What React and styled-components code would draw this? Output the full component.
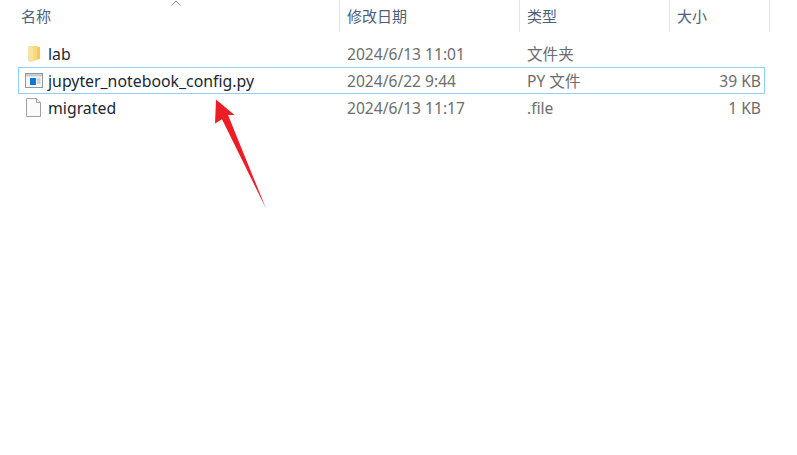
import React from "react";
import styled, { createGlobalStyle } from "styled-components";

const GlobalStyle = createGlobalStyle`
  html, body {
    margin: 0;
    padding: 0;
    background: #ffffff;
  }
  body {
    font-family: "Noto Sans", "Noto Sans CJK SC", sans-serif;
  }
`;

const Window = styled.div`
  position: relative;
  width: 797px;
  height: 455px;
  overflow: hidden;
  background: #ffffff;
`;

const Header = styled.div`
  display: grid;
  grid-template-columns: 340px 180px 150px 100px;
  height: 32px;
  margin-bottom: 8px;
`;

const HeaderCell = styled.div`
  display: flex;
  align-items: center;
  padding-left: ${(p) => p.$pad || 7}px;
  padding-bottom: 2px;
  border-right: 1px solid #e5e5e5;
  color: #4c607a;
  font-family: "Noto Sans CJK SC", sans-serif;
  font-size: 15px;
`;

const SortMark = styled.svg`
  position: absolute;
  left: 171px;
  top: 0;
`;

const FileList = styled.div`
  display: flex;
  flex-direction: column;
  margin-left: 18px;
  width: 747px;
`;

const Row = styled.div`
  display: grid;
  grid-template-columns: 321px 180px 150px 96px;
  align-items: center;
  height: 27px;
  box-sizing: border-box;
  border: 1px solid ${(p) => (p.$selected ? "#8fcfff" : "transparent")};
`;

const NameCell = styled.div`
  display: flex;
  align-items: center;
  gap: 5px;
  padding-left: 5px;
  color: #1c2733;
  font-size: 15.85px;
  white-space: nowrap;
`;

const IconSlot = styled.span`
  display: flex;
  width: 19px;
  height: 19px;
  justify-content: center;
  align-items: center;
`;

const InfoCell = styled.div`
  padding-left: 7px;
  color: #6d6d6d;
  font-size: 15.6px;
  white-space: nowrap;
`;

const SizeCell = styled(InfoCell)`
  padding-left: 0;
  padding-right: 5px;
  text-align: right;
`;

const Arrow = styled.svg`
  position: absolute;
  left: 210px;
  top: 95px;
`;

const FolderIcon = () => (
  <svg width="14" height="18" viewBox="0 0 14 18">
    <path d="M1 1h9l3 2v11l-10 3-2-2z" fill="#fbd878" />
    <path d="M1 1h4l1 3v12l-3 1-2-2z" fill="#f6e3a8" />
    <path d="M10 2h3v12h-3z" fill="#f3c95f" />
  </svg>
);

const PyIcon = () => (
  <svg width="18" height="15" viewBox="0 0 18 15">
    <rect x="0.5" y="0.5" width="17" height="14" fill="#f7f7f7" stroke="#8d98a5" />
    <rect x="1" y="1" width="16" height="2.5" fill="#c3cbd3" />
    <rect x="5" y="5" width="6" height="7" fill="#0a78d7" />
    <path d="M12 6h3.5M12 8h3.5M12 10h3.5" stroke="#a5afba" />
  </svg>
);

const BlankIcon = () => (
  <svg width="15" height="19" viewBox="0 0 15 19">
    <path d="M0.5 0.5h10l4 4v14h-14z" fill="#fbfbfb" stroke="#a0a0a0" />
    <path d="M10.5 0.5v4h4" fill="#ececec" stroke="#a0a0a0" />
  </svg>
);

const files = [
  { name: "lab", date: "2024/6/13 11:01", type: "文件夹", size: "", icon: <FolderIcon /> },
  { name: "jupyter_notebook_config.py", date: "2024/6/22 9:44", type: "PY 文件", size: "39 KB", icon: <PyIcon />, selected: true },
  { name: "migrated", date: "2024/6/13 11:17", type: ".file", size: "1 KB", icon: <BlankIcon /> },
];

const App = () => {
  return (
    <Window>
      <GlobalStyle />
      <Header>
        <HeaderCell $pad={21}>名称</HeaderCell>
        <HeaderCell>修改日期</HeaderCell>
        <HeaderCell>类型</HeaderCell>
        <HeaderCell>大小</HeaderCell>
      </Header>
      <SortMark width="10" height="6" viewBox="0 0 10 6">
        <path d="M0.5 5.5L5 1l4.5 4.5" fill="none" stroke="#8a8a8a" />
      </SortMark>
      <FileList>
        {files.map((f) => (
          <Row key={f.name} $selected={f.selected}>
            <NameCell>
              <IconSlot>{f.icon}</IconSlot>
              {f.name}
            </NameCell>
            <InfoCell>{f.date}</InfoCell>
            <InfoCell>{f.type}</InfoCell>
            <SizeCell>{f.size}</SizeCell>
          </Row>
        ))}
      </FileList>
      <Arrow width="60" height="115" viewBox="210 95 60 115">
        <path d="M216 99.5L215 123.5L222 119.3L266 208.5L228 115L234.5 115Z" fill="#ee1c25" />
      </Arrow>
    </Window>
  );
};

export default App;
